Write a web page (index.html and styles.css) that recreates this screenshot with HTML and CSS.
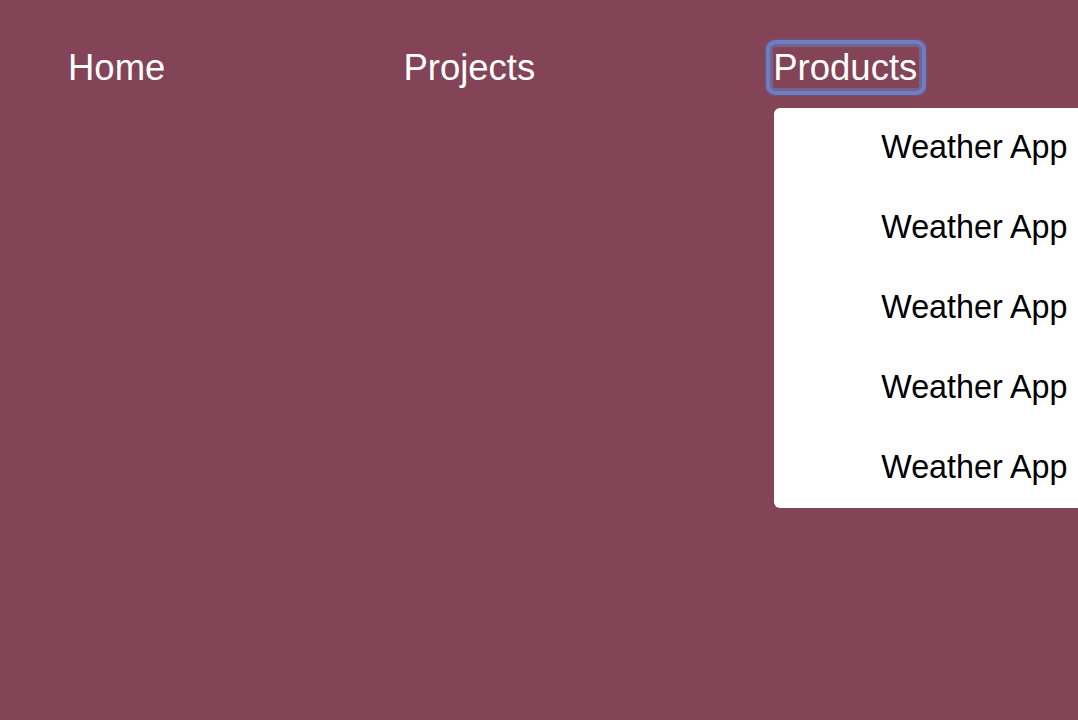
FILE: index.html
```html
<!DOCTYPE html>
<html lang="en">
<head>
<meta charset="utf-8">
<title>Menu</title>
<link rel="stylesheet" href="styles.css">
</head>
<body>
<nav class="nav">
  <a class="nav-link" href="#">Home</a>
  <a class="nav-link" href="#">Projects</a>
  <div class="nav-item">
    <a class="nav-link focused" href="#">Products</a>
    <ul class="dropdown">
      <li class="dropdown-item">Weather App</li>
      <li class="dropdown-item">Weather App</li>
      <li class="dropdown-item">Weather App</li>
      <li class="dropdown-item">Weather App</li>
      <li class="dropdown-item">Weather App</li>
    </ul>
  </div>
</nav>
</body>
</html>
```
FILE: styles.css
```css
html, body {
  margin: 0;
  padding: 0;
  height: 100%;
}
body {
  background: #834457;
  overflow: hidden;
  font-family: "Liberation Sans", Arial, sans-serif;
}
.nav {
  display: flex;
  gap: 238px;
  padding: 48px 0 0 68px;
}
.nav-item {
  position: relative;
}
.nav-link {
  display: block;
  color: #ffffff;
  text-decoration: none;
  font-size: 36.5px;
  line-height: 40px;
  white-space: nowrap;
}
.focused {
  margin-top: -1px;
  padding: 1px 2px 0 0;
  outline: 4px solid #6a7fc5;
  outline-offset: 3px;
  border-radius: 3px;
  box-shadow: 0 0 0 7px rgba(106, 127, 197, 0.35), 0 0 2px 8px rgba(106, 127, 197, 0.25);
}
.dropdown {
  position: absolute;
  top: 60px;
  left: 1px;
  width: calc(100vw - 774px);
  margin: 0;
  padding: 0;
  list-style: none;
  background: #ffffff;
  border-radius: 6px 0 0 6px;
}
.dropdown-item {
  height: 80px;
  line-height: 78px;
  padding-left: 107px;
  font-size: 32.3px;
  color: #000000;
  white-space: nowrap;
}
```
